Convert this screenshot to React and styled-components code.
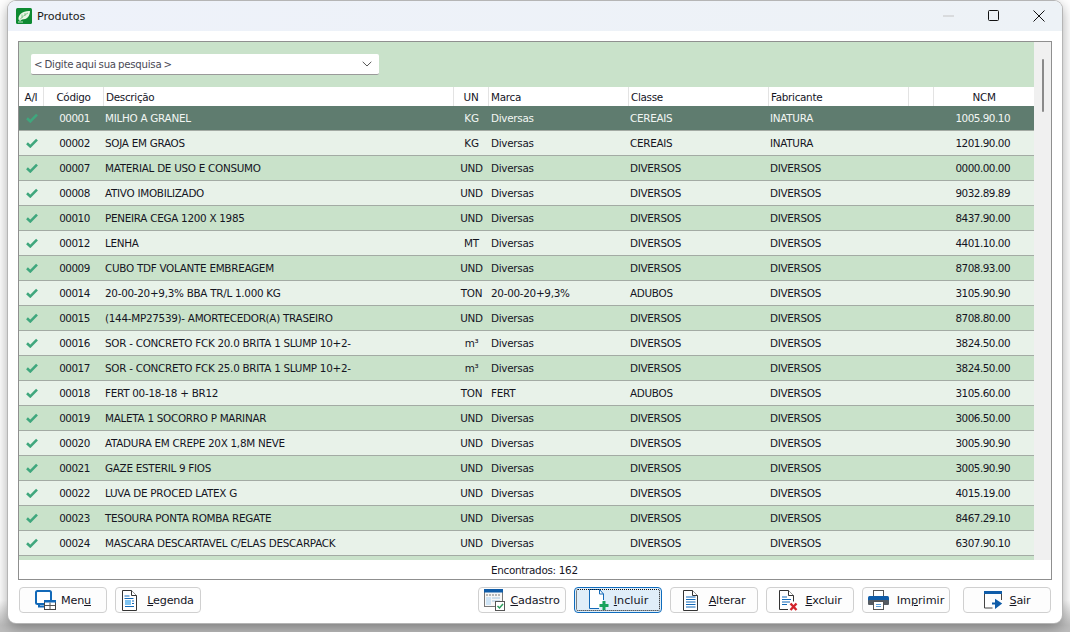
import React from "react";
import styled, { createGlobalStyle } from "styled-components";

const Global = createGlobalStyle`
  html, body { margin: 0; padding: 0; background: #fff; overflow: hidden; }
  body { width: 1070px; height: 632px; font-family: "DejaVu Sans", Verdana, sans-serif; }
`;

const Desktop = styled.div`
  width: 1070px; height: 632px; box-sizing: border-box; padding: 1px 8px 9px; overflow: hidden;
  background: linear-gradient(#ffffff 0, #ffffff 600px, #bdbdbd 625px);
`;
const Win = styled.div`
  height: 622px; display: flex; flex-direction: column; background: #fff; border-radius: 8px;
  box-shadow: 0 0 0 1px #b5b5b5, 0 4px 14px rgba(0,0,0,.38); overflow: hidden;
`;
const TitleBar = styled.div`
  height: 30px; flex: none; display: flex; align-items: center; padding-left: 8px;
  background: linear-gradient(90deg, #eef2fa, #edf2f6);
`;
const TitleText = styled.span`
  margin-left: 5px; font-size: 11.2px; color: #1b1b1b; letter-spacing: -.1px;
`;
const Spacer = styled.div` flex: 1; `;
const WinCtl = styled.div`
  width: 46px; height: 30px; display: flex; align-items: center; justify-content: center;
  margin-top: -1px; margin-left: ${p => p.$ml ?? 0}px;
`;
const Body = styled.div`
  flex: 1; min-height: 0; display: flex; flex-direction: column; padding: 10px 10px 10px;
`;
const Panel = styled.div`
  height: 537px; flex: none; border: 1px solid #8f8f8f; display: flex; flex-direction: column; background: #fff;
`;
const GridArea = styled.div`
  height: 518px; flex: none; display: flex;
`;
const GridMain = styled.div`
  width: 1015px; flex: none; display: flex; flex-direction: column; overflow: hidden; background: #c9e2ca;
`;
const SearchZone = styled.div`
  height: 45px; flex: none; padding: 12px 0 0 12px; box-sizing: border-box;
`;
const Search = styled.div`
  width: 348px; height: 21px; box-sizing: border-box; background: #fff; display: flex; align-items: center;
  justify-content: space-between; padding: 0 7px 0 3px; border-bottom: 1px solid #9a9a9a;
  font-size: 10.2px; color: #4a4a55; letter-spacing: -.25px; word-spacing: -.8px; border-radius: 2px;
`;
const cols = "25px 60px 350px 35px 140px 140px 140px 25px 100px";
const Header = styled.div`
  display: grid; grid-template-columns: ${cols}; height: 19px; flex: none; background: #fff;
`;
const HCell = styled.div`
  font-size: 10.4px; line-height: 20px; color: #15151f; letter-spacing: -.3px; white-space: nowrap;
  border-right: ${p => p.$last ? "none" : "1px solid #e3e3e3"}; box-sizing: border-box;
  text-align: ${p => p.$center ? "center" : "left"}; padding-left: ${p => p.$center ? 0 : 2}px;
`;
const Rows = styled.div` flex: 1; min-height: 0; overflow: hidden; `;
const Row = styled.div`
  display: grid; grid-template-columns: ${cols}; height: 25px; box-sizing: border-box;
  border-bottom: 1px solid #a3aba4; align-items: center;
  font-size: 10.4px; letter-spacing: -.28px; white-space: nowrap;
  color: ${p => p.$selected ? "#f2f6f3" : "#15151f"};
  background: ${p => p.$selected ? "#5f7c6f" : p.$alt ? "#e8f2e9" : "#c9e2ca"};
`;
const Cell = styled.div`
  overflow: hidden; box-sizing: border-box; padding-left: ${p => p.$pad ?? 1}px;
  text-align: ${p => p.$align || "left"}; padding-right: ${p => p.$pr || 0}px;
`;
const CodeCell = styled(Cell)` letter-spacing: -.5px; `;
const CheckCell = styled.div` display: flex; justify-content: center; `;
const ScrollTrack = styled.div`
  flex: 1; background: #f0f0f0; display: flex; justify-content: center;
  padding-top: 17px; box-sizing: border-box;
`;
const ScrollThumb = styled.div` width: 2px; height: 53px; background: #8a8a8a; border-radius: 1px; `;
const Footer = styled.div`
  height: 19px; flex: none; padding: 0 0 0 472px; font-size: 10.4px; line-height: 20px; color: #15151f; letter-spacing: -.3px;
  background: #fff;
`;
const ButtonBar = styled.div`
  display: flex; height: 26px; margin-top: 7px; padding: 0 1px;
`;
const Btn = styled.div`
  width: ${p => p.$w || 88}px; height: 26px; box-sizing: border-box; flex: none;
  margin-left: ${p => p.$ml ?? 8}px; display: flex; align-items: center; justify-content: center; gap: ${p => p.$gap ?? 8}px;
  border: 1px solid ${p => p.$active ? "#0f6cbd" : "#d0d0d0"}; border-radius: 4px;
  background: ${p => p.$active ? "#e0eef9" : "#fdfdfd"};
  font-size: 11.2px; color: #15151f; letter-spacing: ${p => p.$ls ?? -.2}px; position: relative;
  ${p => p.$active ? "&::after{content:'';position:absolute;inset:1px;border:1px dotted #111;border-radius:2px;}" : ""}
`;
const Key = styled.span` text-decoration: underline; text-underline-offset: 1px; `;

const Check = ({ c = "#3fa77d" }) => (
  <svg width="12" height="10" viewBox="0 0 12 10"><path d="M1 5.2 4.3 8.4 11 1.6" fill="none" stroke={c} strokeWidth="2.6" /></svg>
);
const Logo = () => (
  <svg width="16" height="16" viewBox="0 0 16 16">
    <rect width="16" height="16" rx="1.5" fill="#0d8a32" />
    <path d="M2.500 11.500C2 6.500 7 2.500 14 3c0 5-3 8.500-8 8.500L4 13z" fill="#eaf6e6" />
    <path d="M4 11.500C6 9 8.500 7 12 5M6 6.500v3.500M9 5v3" stroke="#6dbb7a" strokeWidth=".8" fill="none" />
    <path d="M2 14h5" stroke="#bfe6c4" strokeWidth="1" />
  </svg>
);
const Chevron = () => (
  <svg width="10" height="6" viewBox="0 0 10 6"><path d="M.7.8 5 5 9.3.8" fill="none" stroke="#555" strokeWidth="1" /></svg>
);

const IconMenu = () => (
  <svg width="21" height="20" viewBox="0 0 21 20">
    <rect x="1" y="1" width="15" height="13" rx="1.5" fill="#fff" stroke="#1269b8" strokeWidth="2" />
    <path d="M4 15v1.500h6" stroke="#1269b8" strokeWidth="2" fill="none" />
    <rect x="9.500" y="10.500" width="11" height="9" fill="#fff" stroke="#444" />
    <rect x="9" y="10" width="12" height="2.500" fill="#1269b8" />
    <path d="M10 15.500h10M15 12.500v7" stroke="#555" />
  </svg>
);
const Doc = ({ children, fold = "#333" }) => (
  <svg width="16" height="21" viewBox="0 0 16 21">
    <path d="M.5.5h9l5 5v15h-14z" fill="#fff" stroke={fold} />
    <path d="M9.500.5v5h5" fill="#fff" stroke={fold} />
    {children}
  </svg>
);
const IconLegenda = () => (
  <Doc>
    <path d="M2.500 6h5M2.500 8.500h9" stroke="#1269b8" />
    <rect x="3" y="10" width="6" height="5" fill="#7fc4f2" />
    <path d="M10 11h2M10 13.500h2M3 16.500h9" stroke="#1269b8" />
  </Doc>
);
const IconCadastro = () => (
  <svg width="21" height="22" viewBox="0 0 21 22">
    <rect x=".5" y=".5" width="18" height="17" fill="#f7f7f7" stroke="#777" />
    <rect y="0" width="19" height="3.500" fill="#0f5ca8" />
    <path d="M2 6h14" stroke="#777" strokeDasharray="2 1" />
    <rect x="2" y="8" width="5" height="8" fill="#cfe4f5" />
    <path d="M8 9h8M8 12h8" stroke="#a9c7df" />
    <rect x="11.500" y="12.500" width="9" height="9" fill="#fff" stroke="#555" />
    <path d="M13.500 17l2 2 3.500-4" fill="none" stroke="#2a9d5c" strokeWidth="1.500" />
  </svg>
);
const IconIncluir = () => (
  <svg width="21" height="22" viewBox="0 0 21 22">
    <path d="M11 19.500H1.500V.5h10l4 4.500v6" fill="#fff" stroke="#1269b8" />
    <path d="M11.500.5v4.500h4" fill="none" stroke="#1269b8" />
    <path d="M16 12v9M11.500 16.500h9" stroke="#19a35b" strokeWidth="3" />
  </svg>
);
const IconAlterar = () => (
  <Doc>
    <path d="M3 7h9.500M3 9.500h9.500M3 12h9.500M3 14.500h9.500M3 17h9.500" stroke="#1269b8" />
  </Doc>
);
const IconExcluir = () => (
  <svg width="20" height="21" viewBox="0 0 20 21">
    <path d="M10 19.500H1.500V.5h9l5 5v6" fill="#fff" stroke="#333" />
    <path d="M10.500.5v5h5" fill="#fff" stroke="#333" />
    <path d="M4 7h5M4 9.500h9M4 12h8M4 14.500h5" stroke="#1269b8" />
    <path d="M12.500 13.500l6 6.500M18.500 13.500l-6 6.500" stroke="#d3232a" strokeWidth="2.400" />
  </svg>
);
const IconImprimir = () => (
  <svg width="21" height="20" viewBox="0 0 21 20">
    <rect x="5.500" y=".5" width="10" height="6" fill="#fff" stroke="#555" />
    <rect x="0" y="6" width="21" height="8" rx="1.500" fill="#0f5ca8" />
    <rect x="0" y="10" width="21" height="5" rx="1" fill="#555b62" />
    <rect x="5.500" y="11.500" width="10" height="8" fill="#fff" stroke="#555" />
    <path d="M8 14.500h5M8 16.500h5" stroke="#5b9bd5" />
  </svg>
);
const IconSair = () => (
  <svg width="20" height="18" viewBox="0 0 20 18">
    <path d="M.5 1v16h8M17.500 1v8" fill="#fff" stroke="#444" />
    <rect x="0" y="0" width="18" height="3" fill="#0f5ca8" />
    <path d="M8 12.500h6M12 9.500l4.500 3-4.500 3.500z" stroke="#0f5ca8" strokeWidth="2" fill="#0f5ca8" />
  </svg>
);

const d = "DIVERSOS";
const data = [
  ["00001", "MILHO A GRANEL", "KG", "Diversas", "CEREAIS", "INATURA", "1005.90.10"],
  ["00002", "SOJA EM GRAOS", "KG", "Diversas", "CEREAIS", "INATURA", "1201.90.00"],
  ["00007", "MATERIAL DE USO E CONSUMO", "UND", "Diversas", d, d, "0000.00.00"],
  ["00008", "ATIVO IMOBILIZADO", "UND", "Diversas", d, d, "9032.89.89"],
  ["00010", "PENEIRA CEGA 1200 X 1985", "UND", "Diversas", d, d, "8437.90.00"],
  ["00012", "LENHA", "MT", "Diversas", d, d, "4401.10.00"],
  ["00009", "CUBO TDF VOLANTE EMBREAGEM", "UND", "Diversas", d, d, "8708.93.00"],
  ["00014", "20-00-20+9,3% BBA TR/L 1.000 KG", "TON", "20-00-20+9,3%", "ADUBOS", d, "3105.90.90"],
  ["00015", "(144-MP27539)- AMORTECEDOR(A) TRASEIRO", "UND", "Diversas", d, d, "8708.80.00"],
  ["00016", "SOR - CONCRETO FCK 20.0 BRITA 1 SLUMP 10+2-", "m³", "Diversas", d, d, "3824.50.00"],
  ["00017", "SOR - CONCRETO FCK 25.0 BRITA 1 SLUMP 10+2-", "m³", "Diversas", d, d, "3824.50.00"],
  ["00018", "FERT 00-18-18 + BR12", "TON", "FERT", "ADUBOS", d, "3105.60.00"],
  ["00019", "MALETA 1 SOCORRO P MARINAR", "UND", "Diversas", d, d, "3006.50.00"],
  ["00020", "ATADURA EM CREPE 20X 1,8M NEVE", "UND", "Diversas", d, d, "3005.90.90"],
  ["00021", "GAZE ESTERIL 9 FIOS", "UND", "Diversas", d, d, "3005.90.90"],
  ["00022", "LUVA DE PROCED LATEX G", "UND", "Diversas", d, d, "4015.19.00"],
  ["00023", "TESOURA PONTA ROMBA REGATE", "UND", "Diversas", d, d, "8467.29.10"],
  ["00024", "MASCARA DESCARTAVEL C/ELAS DESCARPACK", "UND", "Diversas", d, d, "6307.90.10"],
];

export default function App() {
  return (
    <Desktop>
      <Global />
      <Win>
        <TitleBar>
          <Logo />
          <TitleText>Produtos</TitleText>
          <Spacer />
          <WinCtl><svg width="11" height="2" viewBox="0 0 11 2"><path d="M0 1h11" stroke="#c4c4c4" /></svg></WinCtl>
          <WinCtl $ml={-1}><svg width="11" height="11" viewBox="0 0 11 11"><rect x=".5" y=".5" width="10" height="10" rx="1" fill="none" stroke="#111" /></svg></WinCtl>
          <WinCtl><svg width="12" height="12" viewBox="0 0 12 12"><path d="M.5.5l11 11M11.500.5l-11 11" stroke="#111" /></svg></WinCtl>
        </TitleBar>
        <Body>
          <Panel>
            <GridArea>
              <GridMain>
                <SearchZone>
                  <Search>&lt; Digite aqui sua pesquisa &gt;<Chevron /></Search>
                </SearchZone>
                <Header>
                  <HCell $center>A/I</HCell>
                  <HCell $center>Código</HCell>
                  <HCell>Descrição</HCell>
                  <HCell $center>UN</HCell>
                  <HCell>Marca</HCell>
                  <HCell>Classe</HCell>
                  <HCell>Fabricante</HCell>
                  <HCell />
                  <HCell $center $last>NCM</HCell>
                </Header>
                <Rows>
                  {data.map((r, i) => (
                    <Row key={r[0]} $selected={i === 0} $alt={i % 2 === 1}>
                      <CheckCell><Check /></CheckCell>
                      <CodeCell $align="center">{r[0]}</CodeCell>
                      <Cell>{r[1]}</Cell>
                      <Cell $align="center" $pad={0}>{r[2]}</Cell>
                      <Cell $pad={2}>{r[3]}</Cell>
                      <Cell>{r[4]}</Cell>
                      <Cell>{r[5]}</Cell>
                      <Cell />
                      <CodeCell $align="right" $pr={24}>{r[6]}</CodeCell>
                    </Row>
                  ))}
                </Rows>
              </GridMain>
              <ScrollTrack><ScrollThumb /></ScrollTrack>
            </GridArea>
            <Footer>Encontrados: 162</Footer>
          </Panel>
          <ButtonBar>
            <Btn $ml={0} $gap={5}><IconMenu /><span>Men<Key>u</Key></span></Btn>
            <Btn $w={86} $gap={9}><IconLegenda /><span><Key>L</Key>egenda</span></Btn>
            <Spacer />
            <Btn $ml={0} $gap={5} $ls={-.1}><IconCadastro /><span><Key>C</Key>adastro</span></Btn>
            <Btn $active $gap={5} $ls={0}><IconIncluir /><span><Key>I</Key>ncluir</span></Btn>
            <Btn $gap={10}><IconAlterar /><span><Key>A</Key>lterar</span></Btn>
            <Btn $gap={7}><IconExcluir /><span><Key>E</Key>xcluir</span></Btn>
            <Btn $gap={8} $ls={0}><IconImprimir /><span>Im<Key>p</Key>rimir</span></Btn>
            <Btn $ml={13} $gap={6}><IconSair /><span><Key>S</Key>air</span></Btn>
          </ButtonBar>
        </Body>
      </Win>
    </Desktop>
  );
}
